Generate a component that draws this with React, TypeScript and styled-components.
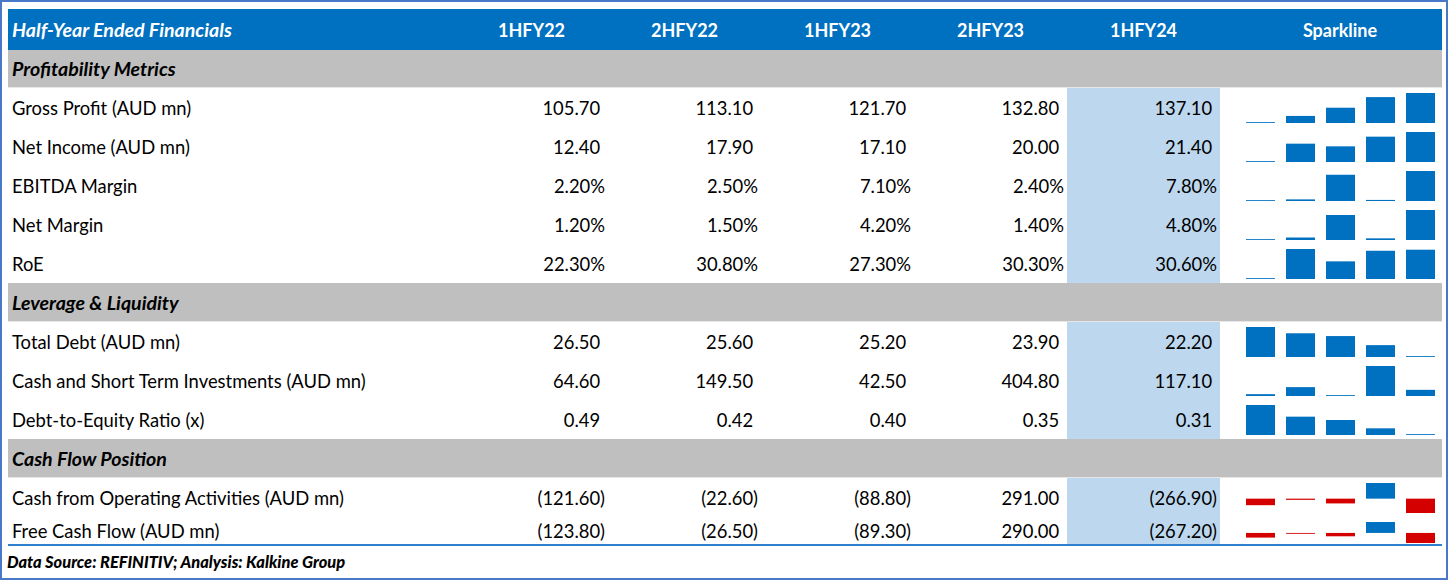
import React from 'react';
import styled, { createGlobalStyle } from 'styled-components';

const GlobalStyle = createGlobalStyle`
  html, body {
    margin: 0;
    padding: 0;
    background: #ffffff;
  }
  body {
    font-family: Lato, "Open Sans", Arial, sans-serif;
    color: #000;
  }
`;

const COLS = '447px 153px 153px 153px 153px 153px 222px';

type Group = {
  title: string;
  rows: { label: string; values: number[]; pct?: boolean }[];
};

const groups: Group[] = [
  {
    title: 'Profitability Metrics',
    rows: [
      { label: 'Gross Profit (AUD mn)', values: [105.7, 113.1, 121.7, 132.8, 137.1] },
      { label: 'Net Income (AUD mn)', values: [12.4, 17.9, 17.1, 20.0, 21.4] },
      { label: 'EBITDA Margin', values: [2.2, 2.5, 7.1, 2.4, 7.8], pct: true },
      { label: 'Net Margin', values: [1.2, 1.5, 4.2, 1.4, 4.8], pct: true },
      { label: 'RoE', values: [22.3, 30.8, 27.3, 30.3, 30.6], pct: true },
    ],
  },
  {
    title: 'Leverage & Liquidity',
    rows: [
      { label: 'Total Debt (AUD mn)', values: [26.5, 25.6, 25.2, 23.9, 22.2] },
      { label: 'Cash and Short Term Investments (AUD mn)', values: [64.6, 149.5, 42.5, 404.8, 117.1] },
      { label: 'Debt-to-Equity Ratio (x)', values: [0.49, 0.42, 0.4, 0.35, 0.31] },
    ],
  },
  {
    title: 'Cash Flow Position',
    rows: [
      { label: 'Cash from Operating Activities (AUD mn)', values: [-121.6, -22.6, -88.8, 291.0, -266.9] },
      { label: 'Free Cash Flow (AUD mn)', values: [-123.8, -26.5, -89.3, 290.0, -267.2] },
    ],
  },
];

const periods = ['1HFY22', '2HFY22', '1HFY23', '2HFY23', '1HFY24'];

const Frame = styled.div`
  width: 1448px;
  height: 580px;
  box-sizing: border-box;
  border: 2px solid #4a78c9;
  padding: 7px 4px 0 6px;
  display: flex;
  flex-direction: column;
  overflow: hidden;
`;

const Table = styled.div`
  display: flex;
  flex-direction: column;
  width: 1434px;
  border-bottom: 2px solid #2f7fcf;
`;

const HeadRow = styled.div`
  display: grid;
  grid-template-columns: ${COLS};
  height: 41px;
  background: #0070c0;
  color: #fff;
  font-size: 18px;
  font-weight: 700;
  align-items: center;
`;

const HeadTitle = styled.div`
  padding-left: 4px;
  font-size: 19.6px;
  font-style: italic;
  white-space: nowrap;
`;

const HeadCell = styled.div<{ $shift?: number }>`
  text-align: center;
  padding-left: ${(p) => p.$shift ?? 0}px;
`;

const Band = styled.div<{ $h: number }>`
  height: ${(p) => p.$h}px;
  box-sizing: border-box;
  background: #bfbfbf;
  border-bottom: 1px solid #e6e6e6;
  display: flex;
  align-items: center;
  padding-left: 4px;
  font-size: 19.6px;
  font-weight: 700;
  font-style: italic;
`;

const Row = styled.div<{ $h: number }>`
  display: grid;
  grid-template-columns: ${COLS};
  height: ${(p) => p.$h}px;
  font-size: 18.4px;
`;

const Label = styled.div`
  display: flex;
  align-items: center;
  padding-left: 4px;
  white-space: nowrap;
`;

const Num = styled.div<{ $hl?: boolean }>`
  display: flex;
  align-items: center;
  justify-content: flex-end;
  padding-right: 3px;
  background: ${(p) => (p.$hl ? '#bdd7ee' : 'transparent')};
  white-space: nowrap;
`;

const Ghost = styled.span`
  visibility: hidden;
`;

const Footer = styled.div`
  height: 31px;
  display: flex;
  align-items: center;
  margin-left: -1px;
  font-size: 16.4px;
  font-weight: 900;
  font-style: italic;
  white-space: nowrap;
`;

const fmt = (v: number, pct?: boolean) => {
  const s = Math.abs(v).toFixed(2);
  if (pct) return <>{s}%</>;
  if (v < 0) return <>({s})</>;
  return (
    <>
      {s}
      <Ghost>)</Ghost>
    </>
  );
};

const Spark = ({ values, h, chart }: { values: number[]; h: number; chart: number }) => {
  const max = Math.max(...values);
  const min = Math.min(...values);
  const range = max - min || 1;
  const top = 5;
  const mixed = min < 0 && max > 0;
  const zero = mixed ? top + (chart * max) / range : top + chart;
  return (
    <svg width={222} height={h}>
      {values.map((v, i) => {
        const x = 26 + i * 40;
        let y: number;
        let bh: number;
        if (mixed) {
          bh = Math.max(1, (Math.abs(v) * chart) / range);
          y = v >= 0 ? zero - bh : zero;
        } else {
          bh = Math.max(1, ((v - min) * chart) / range);
          y = zero - bh;
        }
        return (
          <rect
            key={i}
            x={x}
            y={y}
            width={29}
            height={bh}
            fill={v < 0 ? '#d40000' : '#0070c0'}
            opacity={bh <= 1 ? 0.85 : 1}
          />
        );
      })}
    </svg>
  );
};

export default function App() {
  return (
    <>
      <GlobalStyle />
      <Frame>
        <Table>
          <HeadRow>
            <HeadTitle>Half-Year Ended Financials</HeadTitle>
            {periods.map((p) => (
              <HeadCell key={p}>{p}</HeadCell>
            ))}
            <HeadCell $shift={18}>Sparkline</HeadCell>
          </HeadRow>
          {groups.map((g, gi) => (
            <React.Fragment key={g.title}>
              <Band $h={gi === 0 ? 38 : 39}>{g.title}</Band>
              {g.rows.map((r, ri) => {
                const last = gi === groups.length - 1 && ri === g.rows.length - 1;
                const h = last ? 27 : 39;
                return (
                  <Row key={r.label} $h={h}>
                    <Label>{r.label}</Label>
                    {r.values.map((v, i) => (
                      <Num key={i} $hl={i === 4}>
                        {fmt(v, r.pct)}
                      </Num>
                    ))}
                    <Spark values={r.values} h={h} chart={last ? 21 : 30} />
                  </Row>
                );
              })}
            </React.Fragment>
          ))}
        </Table>
        <Footer>Data Source: REFINITIV; Analysis: Kalkine Group</Footer>
      </Frame>
    </>
  );
}
